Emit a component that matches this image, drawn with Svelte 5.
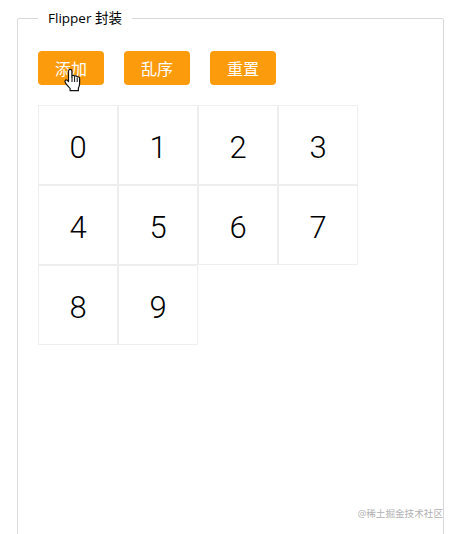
<script>
  const numbers = [0, 1, 2, 3, 4, 5, 6, 7, 8, 9];
  const actions = ['添加', '乱序', '重置'];
</script>

<div class="page">
  <fieldset class="panel">
    <legend>Flipper 封装</legend>
    <div class="actions">
      {#each actions as action, i}
        <button class="btn">
          {action}
          {#if i === 0}
            <svg class="cursor" viewBox="0 0 18 24" width="19" height="24" aria-hidden="true">
              <path
                d="M5 13.5V3.2C5 2 5.8 1.3 6.7 1.3S8.4 2 8.4 3.2V9l.1-1c.6-.9 2.3-.8 2.6.4.7-.8 2.3-.6 2.6.6.9-.5 2.4 0 2.4 1.4v5.2c0 2-.5 3.2-1.2 4.4v2.7H6.6v-2.2C5.4 18.900 3.800 17.500 2.300 15.300 1.400 14 1.100 13 1.700 12.300c.7-.8 2-.4 3.300 1.200Z"
                fill="#fff"
                stroke="#111"
                stroke-width="1.200"
                stroke-linejoin="round"
              />
              <path d="M8.500 9v5M11.100 9v5M13.700 10v4" fill="none" stroke="#111" stroke-width="1" />
            </svg>
          {/if}
        </button>
      {/each}
    </div>
    <div class="grid">
      {#each numbers as n}
        <div class="cell">{n}</div>
      {/each}
    </div>
  </fieldset>
  <span class="watermark">@稀土掘金技术社区</span>
</div>

<style>
  :global(body) {
    margin: 0;
    background: #fff;
  }

  .page {
    position: relative;
    width: 458px;
    height: 534px;
    overflow: hidden;
    font-family: "Open Sans", "Noto Sans CJK SC", sans-serif;
    color: #000;
  }

  .panel {
    box-sizing: border-box;
    width: 427px;
    height: 560px;
    margin: 11px 0 0 17px;
    padding: 26px 20px 0;
    border: 1px solid #d9d9d9;
    border-radius: 2px;
    min-width: 0;
  }

  legend {
    margin-left: 0;
    padding: 0 10px;
    font-size: 13.5px;
    line-height: 14px;
  }

  .actions {
    display: flex;
    gap: 20px;
  }

  .btn {
    position: relative;
    width: 66px;
    height: 34px;
    padding: 0;
    border: 0;
    border-radius: 4px;
    background: #fc9c0c;
    color: #fff;
    font: inherit;
    font-size: 16px;
  }

  .cursor {
    position: absolute;
    left: 25px;
    top: 17px;
  }

  .grid {
    display: flex;
    flex-wrap: wrap;
    width: 320px;
    margin-top: 20px;
  }

  .cell {
    box-sizing: border-box;
    display: flex;
    align-items: center;
    justify-content: center;
    width: 80px;
    height: 80px;
    padding-top: 4px;
    border: 1px solid #eee;
    font-family: Roboto, sans-serif;
    font-size: 31px;
    font-weight: 300;
  }

  .watermark {
    position: absolute;
    right: 15px;
    top: 506px;
    font-size: 9.6px;
    color: #b0b0b0;
    background: #fff;
  }
</style>
